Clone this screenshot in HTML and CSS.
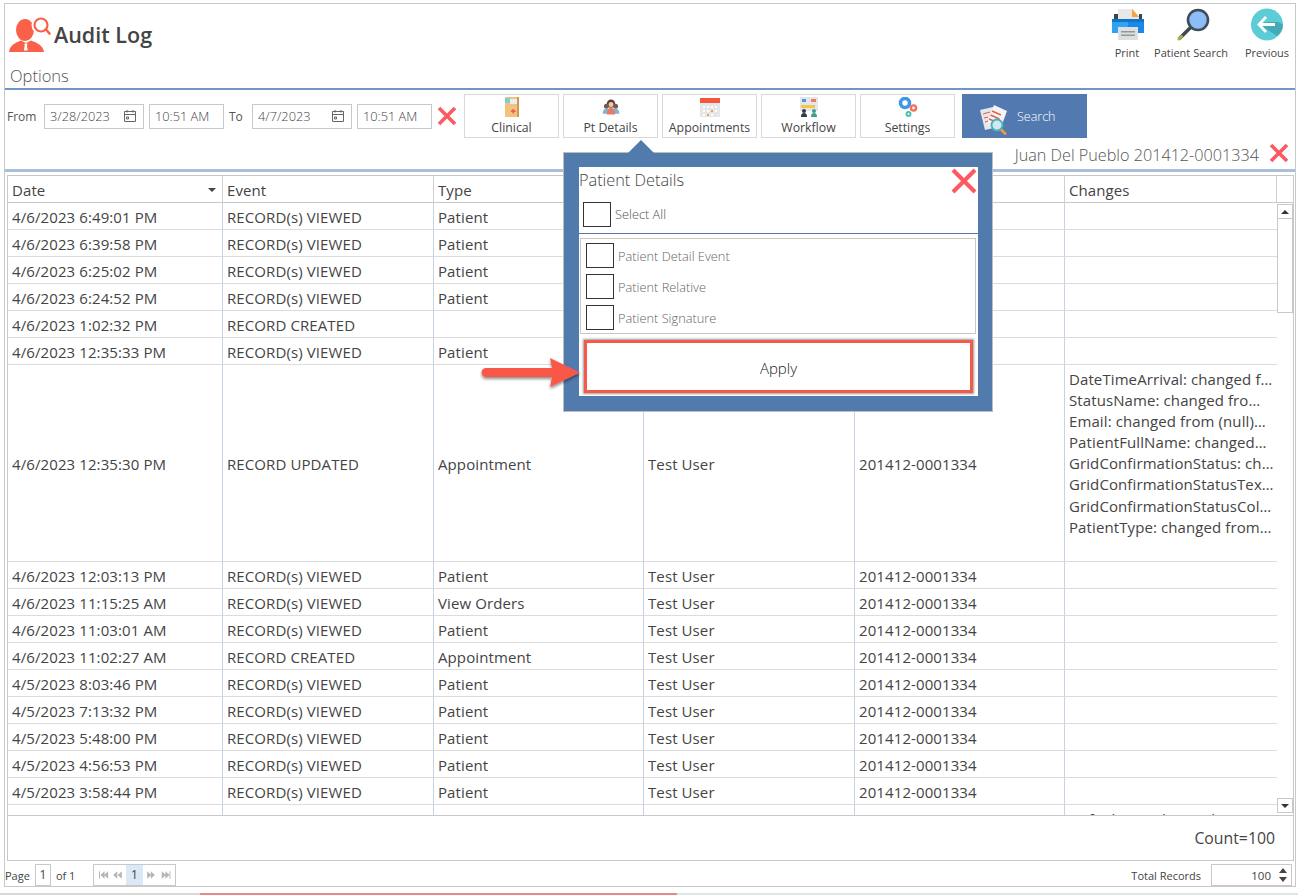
FILE: index.html
```html
<!DOCTYPE html>
<html lang="en">
<head>
<meta charset="utf-8">
<title>Audit Log</title>
<link rel="stylesheet" href="styles.css">
</head>
<body>
<div class="page">
  <div class="frame">
    <header class="top">
      <div class="top-left">
        <div class="title-row">
          <svg class="logo" viewBox="9 15 42 38"><ellipse cx="25" cy="29" rx="9" ry="11" fill="#fb6148"/><circle cx="41" cy="24" r="9.500" fill="#fff"/><circle cx="41" cy="24" r="6.500" fill="none" stroke="#fb6148" stroke-width="2.200"/><path d="M46 28.500 49.500 32.500" stroke="#fb6148" stroke-width="2.600" stroke-linecap="round"/><path d="M9 51C10 44 15 42 21 39.500L26 42 31 39.500C37 42 43 44 44 51Z" fill="#fb6148"/><path d="M24.500 42.500h3l-.6 2 .9 5h-4l.9-5z" fill="#fff"/></svg>
          <h1>Audit Log</h1>
        </div>
        <div class="options">Options</div>
      </div>
      <nav class="top-actions">
        <a class="act act-print"><svg viewBox="0 0 34 33"><path d="M7 1h15l6 7v8H7z" fill="#e8e8e8"/><path d="M21 1l7 8h-7z" fill="#f9a13a"/><path d="M3 6h4v6H3zM28 6h3v6h-3z" fill="#37474f"/><path d="M1 11h16v14H1z" fill="#2ea3f2"/><path d="M17 11h16v14H17z" fill="#1b87e6"/><path d="M1 11h32v3H1z" fill="#0f75c9"/><path d="M7 19h20v13H7z" fill="#dfdfdf"/><path d="M10 23h14v1.500H10zM10 26.500h14V28H10z" fill="#8f9aa0"/></svg><span>Print</span></a>
        <a class="act act-search"><svg viewBox="0 0 34 33"><path d="M13 20 3 30" stroke="#3f4a4f" stroke-width="3.500" stroke-linecap="round"/><path d="M4.500 28.500 2 31" stroke="#a8b24a" stroke-width="3" stroke-linecap="round"/><circle cx="21" cy="12" r="10" fill="#8dbdf6" stroke="#414d55" stroke-width="2.600"/></svg><span>Patient Search</span></a>
        <a class="act act-prev"><svg viewBox="0 0 34 33"><circle cx="17" cy="16.500" r="16" fill="#5ccdd6"/><path d="M9 16.500 27 28A16 16 0 0 0 33 16.500L28 14H16z" fill="#46aab6"/><path d="M16 9 9 16.500 16 24M10 16.500h15" fill="none" stroke="#fff" stroke-width="2.800"/></svg><span>Previous</span></a>
      </nav>
    </header>

    <div class="toolbar">
      <span class="lbl lbl-from">From</span>
      <div class="field field-date"><span>3/28/2023</span><svg class="cal" viewBox="0 0 14 14"><path d="M1.500 2.500h11v10h-11zM1.500 5.500h11M4 1v2.500M10 1v2.500M3.500 8h2v2h-2z" fill="none" stroke="#666"/></svg></div>
      <div class="field field-time"><span>10:51 AM</span></div>
      <span class="lbl lbl-to">To</span>
      <div class="field field-date"><span>4/7/2023</span><svg class="cal" viewBox="0 0 14 14"><path d="M1.500 2.500h11v10h-11zM1.500 5.500h11M4 1v2.500M10 1v2.500M3.500 8h2v2h-2z" fill="none" stroke="#666"/></svg></div>
      <div class="field field-time"><span>10:51 AM</span></div>
      <svg class="x x-tool" viewBox="0 0 20 20"><path d="M2 2 18 18M18 2 2 18" stroke="#fb5a62" stroke-width="3.600"/></svg>

      <button class="tool">
        <svg viewBox="0 0 20 20"><path d="M3 0h12v20H3z" fill="#f3c27c"/><path d="M15 0h2v20h-2z" fill="#cf9a55"/><path d="M3 1h5v5H3z" fill="#7fd0c8"/><path d="M8 2h7v5H8z" fill="#e9eef0"/><path d="M10.500 12h1.600v1.500h1.500v1.500h-1.500v1.500h-1.600V15H9v-1.500h1.500z" fill="#ef5a4a"/></svg>
        <span>Clinical</span>
      </button>
      <button class="tool">
        <svg viewBox="-2 -2 24 24"><circle cx="10" cy="6" r="5" fill="#5a3f36"/><circle cx="10" cy="7" r="3" fill="#f5c6a5"/><circle cx="4.500" cy="9" r="3" fill="#7a5a4e"/><circle cx="15.500" cy="9" r="3" fill="#7a5a4e"/><path d="M0 18c0-4 2-6 4.500-6S9 14 9 18zM11 18c0-4 2-6 4.500-6s4.500 2 4.500 6z" fill="#79b7d6"/><path d="M5 19c0-5 2-8 5-8s5 3 5 8z" fill="#e57a68"/></svg>
        <span>Pt Details</span>
      </button>
      <button class="tool">
        <svg viewBox="0 0 20 20"><path d="M0 1h20v19H0z" fill="#e4e6ea"/><path d="M0 1h20v5H0z" fill="#f4553b"/><path d="M3 9h2v2H3zM7 9h2v2H7zM11 9h2v2h-2zM15 9h2v2h-2zM3 13h2v2H3zM7 13h2v2H7zM15 13h2v2h-2zM3 17h2v2H3zM11 17h2v2h-2z" fill="#fff"/><path d="M11 13h2v2h-2zM7 17h2v2H7z" fill="#f9a13a"/></svg>
        <span>Appointments</span>
      </button>
      <button class="tool">
        <svg viewBox="0 0 20 20"><path d="M1 0h18v14H1z" fill="#e4e6ea"/><path d="M3 2h4v3H3z" fill="#4a9ad8"/><path d="M12 2h5v3h-5z" fill="#ef7a6a"/><path d="M2 8h14v3H2z" fill="#f6c64a"/><circle cx="5" cy="14" r="2" fill="#2f3e46"/><path d="M2 20c0-3 1-4 3-4s3 1 3 4z" fill="#2f3e46"/><circle cx="15" cy="14" r="2" fill="#3fa08c"/><path d="M12 20c0-3 1-4 3-4s3 1 3 4z" fill="#3fa08c"/></svg>
        <span>Workflow</span>
      </button>
      <button class="tool">
        <svg viewBox="0 0 20 20"><circle cx="7" cy="6" r="4.500" fill="none" stroke="#3c97e4" stroke-width="3.500"/><circle cx="15.500" cy="11" r="2.600" fill="none" stroke="#f2705c" stroke-width="2.400"/><circle cx="10.500" cy="17" r="2" fill="none" stroke="#4dbfb5" stroke-width="2"/></svg>
        <span>Settings</span>
      </button>
      <button class="go">
        <svg viewBox="0 0 32 31"><path d="M1 6 14 3l5 20-13 3z" fill="#e8e8ea"/><path d="M15 1l13 6-7 19-13-6z" fill="#f4f4f6"/><path d="M13 7l9 4M11.500 11l9 4M10 15l5 2" stroke="#e0604e" stroke-width="1.400"/><path d="M4 10l7-2M5 14l4-1M6 18l3-1" stroke="#e0604e" stroke-width="1.200"/><circle cx="18" cy="21" r="5.500" fill="#cfe9ee" stroke="#45b3bd" stroke-width="2"/><path d="M22 25.500l5 5" stroke="#f29a3e" stroke-width="2.600"/></svg>
        <span>Search</span>
      </button>
    </div>

    <div class="patient">
      <span>Juan Del Pueblo 201412-0001334</span>
      <svg class="x x-patient" viewBox="0 0 20 20"><path d="M2 2 18 18M18 2 2 18" stroke="#fb5a62" stroke-width="3.600"/></svg>
    </div>

    <section class="grid">
      <div class="grid-main">
        <div class="clip">
          <table>
            <colgroup><col class="c1"><col class="c2"><col class="c3"><col class="c4"><col class="c5"><col class="c6"></colgroup>
            <thead><tr><th>Date<i class="sort"></i></th><th>Event</th><th>Type</th><th></th><th></th><th>Changes</th></tr></thead>
            <tbody>
              <tr><td>4/6/2023 6:49:01 PM</td><td>RECORD(s) VIEWED</td><td>Patient</td><td></td><td></td><td></td></tr>
              <tr><td>4/6/2023 6:39:58 PM</td><td>RECORD(s) VIEWED</td><td>Patient</td><td></td><td></td><td></td></tr>
              <tr><td>4/6/2023 6:25:02 PM</td><td>RECORD(s) VIEWED</td><td>Patient</td><td></td><td></td><td></td></tr>
              <tr><td>4/6/2023 6:24:52 PM</td><td>RECORD(s) VIEWED</td><td>Patient</td><td></td><td></td><td></td></tr>
              <tr><td>4/6/2023 1:02:32 PM</td><td>RECORD CREATED</td><td></td><td></td><td></td><td></td></tr>
              <tr><td>4/6/2023 12:35:33 PM</td><td>RECORD(s) VIEWED</td><td>Patient</td><td></td><td></td><td></td></tr>
              <tr class="tall"><td>4/6/2023 12:35:30 PM</td><td>RECORD UPDATED</td><td>Appointment</td><td>Test User</td><td>201412-0001334</td>
                <td class="changes"><span>DateTimeArrival: changed f…</span><span>StatusName: changed fro…</span><span>Email: changed from (null)…</span><span>PatientFullName: changed…</span><span>GridConfirmationStatus: ch…</span><span>GridConfirmationStatusTex…</span><span>GridConfirmationStatusCol…</span><span>PatientType: changed from…</span></td></tr>
              <tr><td>4/6/2023 12:03:13 PM</td><td>RECORD(s) VIEWED</td><td>Patient</td><td>Test User</td><td>201412-0001334</td><td></td></tr>
              <tr><td>4/6/2023 11:15:25 AM</td><td>RECORD(s) VIEWED</td><td>View Orders</td><td>Test User</td><td>201412-0001334</td><td></td></tr>
              <tr><td>4/6/2023 11:03:01 AM</td><td>RECORD(s) VIEWED</td><td>Patient</td><td>Test User</td><td>201412-0001334</td><td></td></tr>
              <tr><td>4/6/2023 11:02:27 AM</td><td>RECORD CREATED</td><td>Appointment</td><td>Test User</td><td>201412-0001334</td><td></td></tr>
              <tr><td>4/5/2023 8:03:46 PM</td><td>RECORD(s) VIEWED</td><td>Patient</td><td>Test User</td><td>201412-0001334</td><td></td></tr>
              <tr><td>4/5/2023 7:13:32 PM</td><td>RECORD(s) VIEWED</td><td>Patient</td><td>Test User</td><td>201412-0001334</td><td></td></tr>
              <tr><td>4/5/2023 5:48:00 PM</td><td>RECORD(s) VIEWED</td><td>Patient</td><td>Test User</td><td>201412-0001334</td><td></td></tr>
              <tr><td>4/5/2023 4:56:53 PM</td><td>RECORD(s) VIEWED</td><td>Patient</td><td>Test User</td><td>201412-0001334</td><td></td></tr>
              <tr><td>4/5/2023 3:58:44 PM</td><td>RECORD(s) VIEWED</td><td>Patient</td><td>Test User</td><td>201412-0001334</td><td></td></tr>
              <tr class="tall"><td></td><td></td><td></td><td></td><td></td><td class="changes"><span>DefaultProviderID: ch…</span></td></tr>
            </tbody>
          </table>
        </div>
        <div class="scroll">
          <div class="scroll-head"></div>
          <div class="thumb"><div class="sbtn"><i class="up"></i></div></div>
          <div class="sbtn sbtn-down"><i class="down"></i></div>
        </div>
      </div>
      <div class="count">Count=100</div>
    </section>

    <footer class="pager">
      <span class="p-page">Page</span>
      <span class="p-box">1</span>
      <span class="p-of">of 1</span>
      <div class="p-nav">
        <svg viewBox="0 0 32 22"><g fill="#b5b5b5"><path d="M4 7h1v8H4zM10 7v8L5.500 11zM14 7v8L9.500 11z"/><path d="M24 7v8l-4.500-4zM29 7v8l-4.500-4z"/></g></svg>
        <b>1</b>
        <svg viewBox="0 0 32 22"><g fill="#b5b5b5"><path d="M3 7v8l4.500-4zM7 7v8l4.500-4z"/><path d="M19 7v8l4.500-4zM23 7v8l4.500-4zM27.500 7h1v8h-1z"/></g></svg>
      </div>
      <span class="p-total">Total Records</span>
      <div class="p-input"><span>100</span><svg viewBox="0 0 10 16"><path d="M5 1 9 6H1zM5 15 1 10h8z" fill="#444"/></svg></div>
    </footer>
  </div>

  <div class="strip"><i class="s-a"></i><i class="s-b"></i><i class="s-c"></i></div>

  <aside class="popup">
    <i class="caret"></i>
    <div class="pop-inner">
      <div class="pop-head"><span>Patient Details</span><svg class="x x-pop" viewBox="0 0 26 26"><path d="M2 2 24 24M24 2 2 24" stroke="#fb5a62" stroke-width="4.200"/></svg></div>
      <label class="sel-all"><i class="box"></i><span>Select All</span></label>
      <div class="pop-list">
        <label class="opt"><i class="box"></i><span>Patient Detail Event</span></label>
        <label class="opt"><i class="box"></i><span>Patient Relative</span></label>
        <label class="opt"><i class="box"></i><span>Patient Signature</span></label>
      </div>
      <button class="apply">Apply</button>
    </div>
  </aside>
  <svg class="pointer" viewBox="0 0 104 40"><defs><filter id="sh" x="-10%" y="-30%" width="120%" height="170%"><feDropShadow dx="0" dy="2" stdDeviation="1.500" flood-color="#000" flood-opacity=".45"/></filter></defs><path d="M6 13H72L70 3 100 17.500 70 32 72 22H6A4.500 4.500 0 0 1 6 13Z" fill="#f9594a" filter="url(#sh)"/></svg>
</div>
</body>
</html>
```

FILE: styles.css
```css
* { box-sizing: border-box; }
html, body { margin: 0; padding: 0; background: #fff; overflow: hidden; }
body { font-family: "Open Sans", "Noto Sans", sans-serif; color: #444; }
.page { position: relative; display: flow-root; width: 1298px; height: 895px; }

.frame {
  width: 1292px; height: 884px; margin: 3px 0 0 4px;
  border: 1px solid #c8c8c8; display: flex; flex-direction: column;
}

/* header */
.top { height: 86px; flex: none; display: flex; justify-content: space-between; border-bottom: 2px solid #7395c4; }
.top-left { padding: 11px 0 0 4px; }
.title-row { display: flex; align-items: center; gap: 3px; height: 40px; }
.logo { width: 42px; height: 38px; flex: none; }
h1 { margin: 0; font-size: 21.500px; font-weight: 600; color: #444; line-height: 1; }
.options { margin: 10px 0 0 1px; font-size: 16.500px; font-weight: 300; color: #555; line-height: 22px; }
.top-actions { display: flex; padding: 4px 5px 0 0; }
.act { display: flex; flex-direction: column; align-items: center; font-size: 11px; color: #444; }
.act svg { width: 34px; height: 33px; flex: none; }
.act span { margin-top: 4px; line-height: 16px; white-space: nowrap; }
.act-print { width: 30px; margin-right: 10px; }
.act-print svg { margin-left: 2px; }
.act-search { width: 78px; margin-right: 14px; }
.act-search svg { margin-left: 6px; }
.act-prev { width: 46px; }

/* toolbar */
.toolbar { height: 48px; flex: none; display: flex; align-items: center; padding: 4px 0 0 2px; }
.lbl { font-size: 12px; color: #555; }
.lbl-from { width: 37px; }
.lbl-to { width: 23px; margin-left: 5px; }
.field { height: 25px; border: 1px solid #c8c8c8; display: flex; align-items: center; justify-content: space-between; padding: 0 6px 0 5px; font-size: 12.800px; font-weight: 300; color: #444; }
.field-date { width: 100px; }
.field-time { width: 75px; margin-left: 5px; }
.cal { width: 14px; height: 14px; }
.x { display: block; flex: none; }
.x-tool { width: 20px; height: 20px; margin: 0 7px 0 5px; }
.tool, .go { font-family: inherit; padding: 0; cursor: pointer; height: 44px; }
.tool { width: 95px; margin-right: 4px; background: #fff; border: 1px solid #d9d9d9; display: flex; flex-direction: column; align-items: center; color: #444; font-size: 12.300px; }
.tool svg { width: 20px; height: 20px; margin-top: 2px; flex: none; }
.tool span { line-height: 16px; margin-top: 3px; white-space: nowrap; }
.go { width: 125px; margin-left: 3px; background: #537ab0; border: 0; color: #fff; font-size: 12.500px; font-weight: 300; display: flex; align-items: center; padding-left: 17px; gap: 6px; }
.go svg { width: 32px; height: 31px; margin-top: 6px; flex: none; }

/* patient */
.patient { height: 34px; flex: none; display: flex; align-items: center; justify-content: flex-end; gap: 10px; padding: 0 6px 0 0; border-bottom: 3px solid #a9c0dc; font-size: 16.200px; font-weight: 300; color: #555; }
.patient > span { margin-top: 2px; }
.x-patient { width: 20px; height: 20px; margin-top: -1px; }

/* grid */
.grid { margin: 3px 1px 0 2px; height: 686px; flex: none; border: 1px solid #c8c8c8; }
.grid-main { display: flex; height: 639px; }
.clip { width: 1269px; height: 639px; overflow: hidden; flex: none; }
table { border-collapse: separate; border-spacing: 0; table-layout: fixed; width: 1269px; font-size: 15px; letter-spacing: .1px; color: #444; }
.c1 { width: 215px; } .c2 { width: 211px; } .c3 { width: 210px; } .c4 { width: 211px; } .c5 { width: 210px; } .c6 { width: 212px; }
th { position: relative; height: 27px; padding: 1px 0 0 4px; text-align: left; font-weight: 400; font-size: 15px; border-right: 1px solid #d0d0d0; border-bottom: 1px solid #c8c8c8; }
td { height: 27px; padding: 1px 0 0 4px; white-space: nowrap; overflow: hidden; border-right: 1px solid #c5d3e3; border-bottom: 1px solid #dcdcdc; }
.tall td { height: 197px; }
td:last-child { border-right: 0; }
.tall .changes { vertical-align: top; padding-top: 4px; }
.changes span { display: block; line-height: 21.100px; white-space: nowrap; }
.sort { position: absolute; right: 6px; top: 12px; border: 4px solid transparent; border-top-color: #444; border-bottom: 0; }

.scroll { width: 16px; flex: none; display: flex; flex-direction: column; }
.scroll-head { height: 27px; border-bottom: 1px solid #c8c8c8; margin-bottom: 1px; flex: none; }
.thumb { height: 109px; border: 1px solid #c8c8c8; flex: none; }
.sbtn { height: 14px; border-bottom: 1px solid #c8c8c8; display: flex; align-items: center; justify-content: center; }
.sbtn-down { height: 15px; border: 1px solid #c8c8c8; margin-top: auto; margin-bottom: 2px; }
.up { border: 4px solid transparent; border-bottom-color: #333; border-top: 0; }
.down { border: 4px solid transparent; border-top-color: #333; border-bottom: 0; }

.count { height: 45px; border-top: 1px solid #c8c8c8; display: flex; align-items: center; justify-content: flex-end; padding-right: 18px; font-size: 15.800px; color: #444; }

/* pager */
.pager { height: 25px; flex: none; display: flex; align-items: flex-end; font-size: 11px; color: #444; }
.p-page, .p-of, .p-total { line-height: 21px; }
.p-box { width: 16px; height: 22px; margin-left: 5px; border: 1px solid #c8c8c8; text-align: center; line-height: 20px; font-size: 12px; }
.p-of { margin-left: 5px; width: 37px; }
.p-nav { width: 83px; height: 22px; border: 1px solid #c8c8c8; display: flex; }
.p-nav svg { width: 32px; height: 20px; flex: none; }
.p-nav b { width: 17px; height: 20px; background: #dbe8f5; text-align: center; line-height: 20px; font-weight: 400; font-size: 12px; }
.p-total { margin-left: auto; }
.p-input { width: 81px; height: 22px; margin: 0 3px 0 10px; border: 1px solid #c8c8c8; display: flex; align-items: center; justify-content: flex-end; padding-right: 3px; gap: 7px; font-size: 11.500px; }
.p-input svg { width: 10px; height: 16px; }

/* bottom strip */
.strip { display: flex; height: 2px; margin-top: 6px; }
.strip i { display: block; height: 2px; }
.s-a { width: 200px; background: #d8d8d8; }
.s-b { width: 477px; background: #e58a8a; }
.s-c { flex: 1; background: #dfe6e6; }

/* popup */
.popup { position: absolute; left: 563px; top: 152px; width: 430px; height: 260px; background: #517aad; border: 1px solid #bdbdbd; padding: 14px 14px 15px 15px; }
.caret { position: absolute; left: 64px; top: -13px; border: 13px solid transparent; border-bottom: 13px solid #517aad; border-top: 0; }
.pop-inner { height: 229px; background: #fff; display: flex; flex-direction: column; }
.pop-head { height: 33px; flex: none; display: flex; justify-content: space-between; font-size: 16.300px; font-weight: 300; color: #444; }
.pop-head span { line-height: 26px; }
.x-pop { width: 26px; height: 26px; margin: 1px 1px 0 0; }
.box { display: block; flex: none; width: 28px; height: 25px; border: 1px solid #333; background: #fff; }
.sel-all { display: flex; align-items: center; height: 33px; margin-bottom: 5px; flex: none; padding: 0 0 5px 4px; box-shadow: 0 1px 0 #517aad; font-size: 12.800px; font-weight: 300; color: #555; gap: 4px; }
.pop-list { margin: 0 2px 0 1px; height: 96px; border: 1px solid #c8c8c8; display: flex; flex-direction: column; padding: 4px 0 0 5px; gap: 6px; flex: none; }
.opt { display: flex; align-items: center; height: 25px; gap: 4px; font-size: 12.800px; font-weight: 300; color: #666; }
.apply { width: 389px; height: 53px; margin: 6px 0 0 5px; background: #fff; border: 3px solid #f4594a; box-shadow: 0 0 2px 1px rgba(0,0,0,.4); font-family: inherit; font-size: 15px; font-weight: 300; color: #222; flex: none; padding: 2px 0 0; }
.pointer { position: absolute; left: 480px; top: 355px; width: 104px; height: 40px; }
```
